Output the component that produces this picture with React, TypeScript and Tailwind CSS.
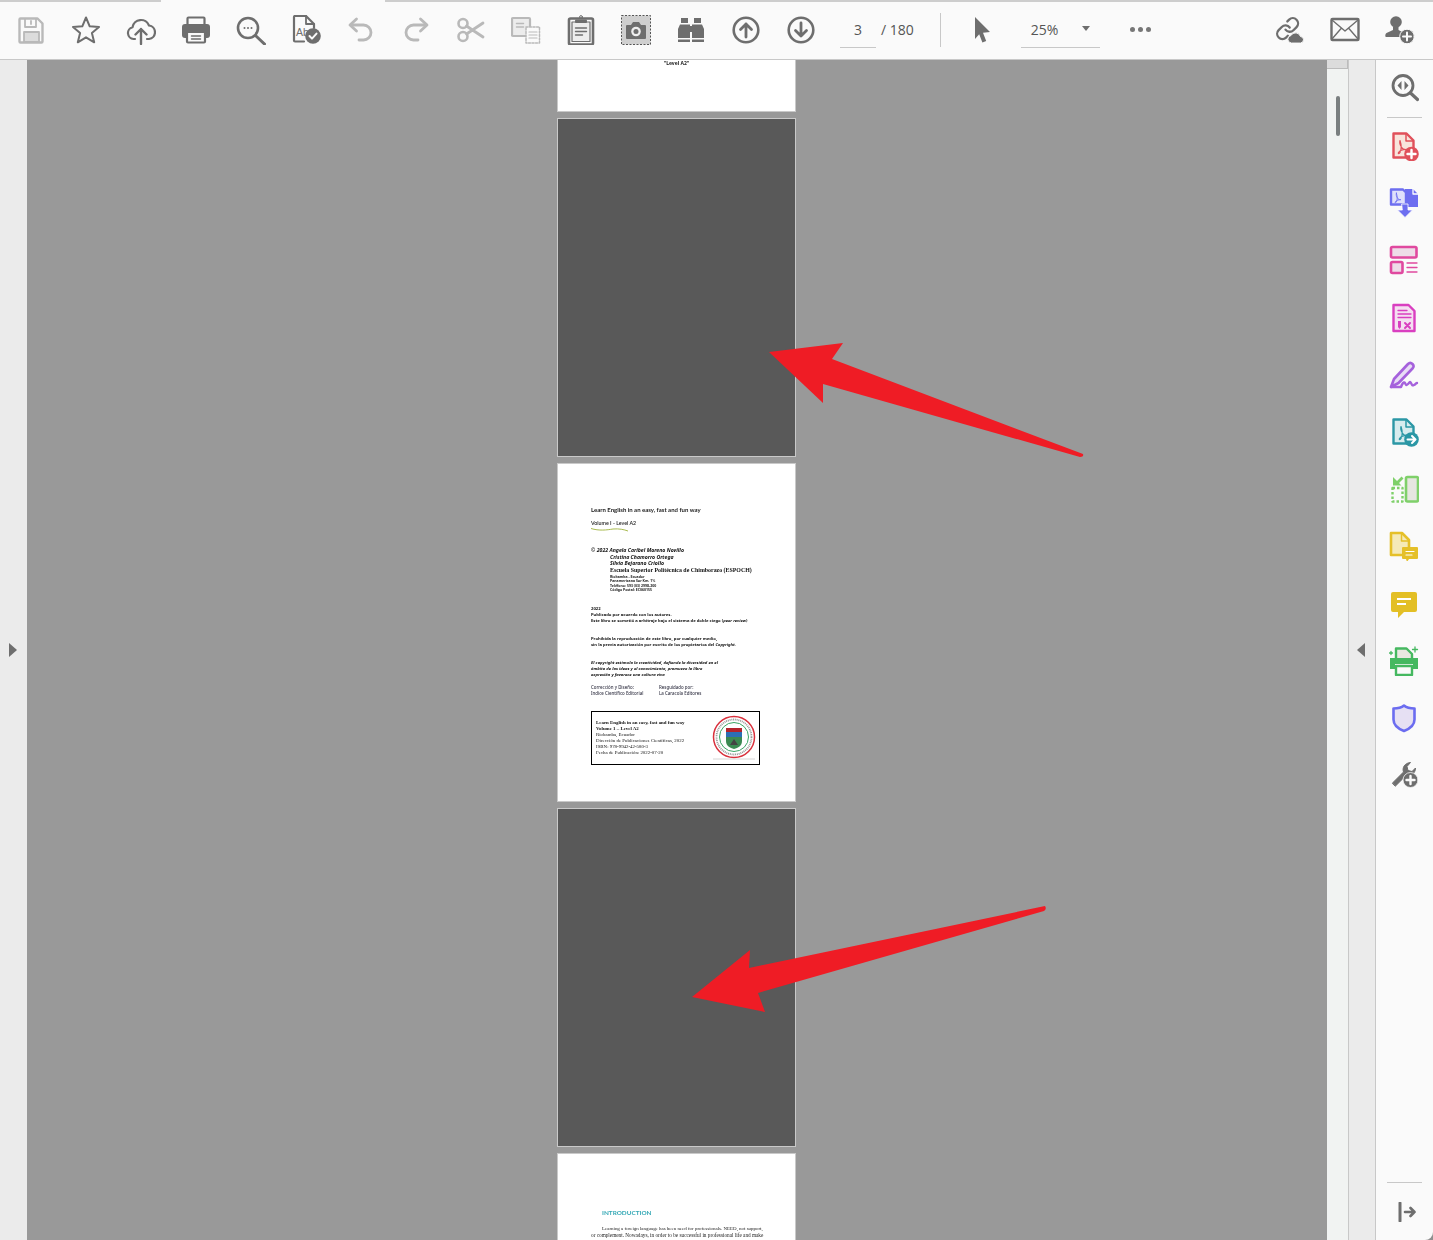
import React from "react";

const D = "#6e6e6e";
const L = "#b9b9b9";

const Ic = ({ children, w = 30, h = 30 }: { children: React.ReactNode; w?: number; h?: number }) => (
  <svg width={w} height={h} viewBox={`0 0 ${w} ${h}`} fill="none" strokeLinecap="round" strokeLinejoin="round">
    {children}
  </svg>
);

const Acro = ({ c, x = 0, y = 0, s = 1 }: { c: string; x?: number; y?: number; s?: number }) => (
  <path transform={`translate(${x} ${y}) scale(${s})`} d="M8 2c-1 3 0 6 2 9 1 2 3 3 6 3-4 0-8 1-10 4-1 2 1 2 2 0 2-4 2-10 0-16z" stroke={c} strokeWidth="1.6" />
);

const toolbarLeft: React.ReactNode[] = [
  <Ic key="save">
    <path d="M3.500 4.500a1 1 0 0 1 1-1h17l5 5v18a1 1 0 0 1-1 1h-21a1 1 0 0 1-1-1z" stroke={L} strokeWidth="2.400" />
    <path d="M9 4v8h11V4" stroke={L} strokeWidth="1.800" />
    <path d="M15 6v3" stroke={L} strokeWidth="1.800" />
    <rect x="8" y="17" width="15" height="10" fill="#dcdcdc" stroke={L} strokeWidth="1.800" />
  </Ic>,
  <Ic key="star">
    <path d="M15 2.500l3.700 8.800 9.300.7-7.100 6 2.300 9.300-8.200-5-8.200 5 2.300-9.300-7.100-6 9.300-.7z" stroke={D} strokeWidth="2" />
  </Ic>,
  <Ic key="cloud">
    <path d="M9 24H7.500a6 6 0 0 1-1-11.800A8.600 8.600 0 0 1 23 10.500a6.800 6.800 0 0 1 0 13.500h-2" stroke={D} strokeWidth="2.200" />
    <path d="M15 29V14M9.500 19.500L15 14l5.500 5.500" stroke={D} strokeWidth="2.400" />
  </Ic>,
  <Ic key="print">
    <rect x="6.500" y="2.500" width="17" height="9" rx="1" stroke={D} strokeWidth="2.200" />
    <rect x="1" y="9" width="28" height="14" rx="3" fill={D} />
    <rect x="6" y="17" width="18" height="10.500" rx="1" fill="#fafafa" stroke={D} strokeWidth="2.200" />
    <path d="M10.500 21h9M10.500 24h9" stroke={D} strokeWidth="1.500" />
  </Ic>,
  <Ic key="find">
    <circle cx="12" cy="13" r="10" stroke={D} strokeWidth="2.600" />
    <path d="M20 21l8.500 8" stroke={D} strokeWidth="3" />
    <circle cx="8.500" cy="13" r="1" fill={D} />
    <circle cx="12" cy="13" r="1" fill={D} />
    <circle cx="15.500" cy="13" r="1" fill={D} />
  </Ic>,
  <Ic key="doc">
    <path d="M13 26.500H4a1 1 0 0 1-1-1V2a1 1 0 0 1 1-1h11l8 8v4" stroke={D} strokeWidth="2.200" />
    <path d="M15 1v8h8" stroke={D} strokeWidth="1.800" />
    <text x="5" y="21" fontSize="10.500" fill={D} fontFamily="Liberation Sans, sans-serif">Ab</text>
    <circle cx="22" cy="21" r="7.800" fill={D} />
    <path d="M18.500 21l2.500 2.600 4.500-5" stroke="#fafafa" strokeWidth="2" />
  </Ic>,
  <Ic key="undo">
    <path d="M5 10h12.500a7.500 7.500 0 0 1 0 15H13" stroke={L} strokeWidth="2.800" />
    <path d="M10.500 4L4 10l6.500 6" stroke={L} strokeWidth="2.800" />
  </Ic>,
  <Ic key="redo">
    <path d="M25 10H12.500a7.500 7.500 0 0 0 0 15H17" stroke={L} strokeWidth="2.800" />
    <path d="M19.500 4L26 10l-6.500 6" stroke={L} strokeWidth="2.800" />
  </Ic>,
  <Ic key="scissors">
    <circle cx="7" cy="8.500" r="4.500" stroke={L} strokeWidth="2.600" />
    <circle cx="7" cy="21.500" r="4.500" stroke={L} strokeWidth="2.600" />
    <path d="M10.500 11l16.500 11M10.500 19L27 8" stroke={L} strokeWidth="2.800" />
  </Ic>,
  <Ic key="copy">
    <rect x="1" y="3" width="18" height="18" rx="1" fill="#ececec" stroke={L} strokeWidth="2.200" />
    <path d="M5.500 8.500h7M5.500 12h7" stroke={L} strokeWidth="1.500" />
    <rect x="15" y="12" width="13.500" height="16" fill="#fafafa" stroke={L} strokeWidth="1.500" strokeDasharray="2 1.500" />
    <path d="M18 17h8M18 20h8M18 23h8" stroke={L} strokeWidth="1.200" />
  </Ic>,
  <Ic key="clip">
    <rect x="3" y="3.500" width="24" height="26" rx="1.500" stroke={D} strokeWidth="2.600" />
    <rect x="6" y="7" width="18" height="19.500" fill="#ededed" stroke={D} strokeWidth="1.200" />
    <path d="M10 5.500h10V7H10z" fill={D} stroke={D} strokeWidth="2" />
    <circle cx="15" cy="2" r="1.400" stroke={D} strokeWidth="1" />
    <path d="M9.500 13h11M9.500 16.500h11M9.500 20h7" stroke={D} strokeWidth="1.400" />
  </Ic>,
  <Ic key="camera">
    <rect x="0.500" y="0.500" width="29" height="29" fill="#cfcfcf" stroke="#555" strokeWidth="1" strokeDasharray="2 1.500" strokeLinecap="butt" />
    <path d="M6 10h4l2-3h6l2 3h4a1 1 0 0 1 1 1v12a1 1 0 0 1-1 1H6a1 1 0 0 1-1-1V11a1 1 0 0 1 1-1z" fill={D} />
    <circle cx="15" cy="16.500" r="4.800" fill="#eeeeee" />
    <circle cx="15" cy="16.500" r="2.500" fill={D} />
  </Ic>,
  <Ic key="binoc">
    <path d="M5 3h7v5H5zM18 3h7v5h-7z" fill={D} />
    <path d="M4 9.500h10V23H2v-9zM16 9.500h10l2 4.500v9H16z" fill={D} />
    <path d="M14 11h2v6h-2z" fill={D} />
    <path d="M2 24.500h12v2.500H2zM16 24.500h12v2.500H16z" fill={D} />
  </Ic>,
  <Ic key="up">
    <circle cx="15" cy="15" r="12.300" stroke={D} strokeWidth="2.600" />
    <path d="M15 22V9M9.500 14.500L15 9l5.500 5.500" stroke={D} strokeWidth="2.800" />
  </Ic>,
  <Ic key="down">
    <circle cx="15" cy="15" r="12.300" stroke={D} strokeWidth="2.600" />
    <path d="M15 8v13M9.500 15.500L15 21l5.500-5.500" stroke={D} strokeWidth="2.800" />
  </Ic>,
];

const Pic = ({ c, tint }: { c: string; tint: string }) => (
  <>
    <path d="M4.500 2.500h13l7 7v17h-20z" fill={tint} stroke={c} strokeWidth="2.400" />
    <path d="M17 3v7h7" stroke={c} strokeWidth="1.500" />
  </>
);

const rail: React.ReactNode[] = [
  <Ic key="create">
    <Pic c="#e0505a" tint="#f8e4dc" />
    <Acro c="#e0505a" x={5} y={8} s={0.75} />
    <circle cx="22.500" cy="23" r="7.300" fill="#e0505a" />
    <path d="M22.500 19v8M18.500 23h8" stroke="#fff" strokeWidth="2.400" />
  </Ic>,
  <Ic key="combine">
    <path d="M2 1.500h12l3 3v12H2z" fill="#dfe0fb" stroke="#6d6ef0" strokeWidth="2.400" />
    <path d="M16 1h8l5 5v13H16z" fill="#6d6ef0" />
    <path d="M24 1v5h5" stroke="#fff" strokeWidth="1.300" />
    <path d="M13 16h6v6h4.500L16 29.500 8.500 22H13z" fill="#6d6ef0" stroke="#fff" strokeWidth="0.800" />
    <Acro c="#6d6ef0" x={3} y={4} s={0.55} />
  </Ic>,
  <Ic key="organize">
    <rect x="2" y="2" width="25.500" height="10.500" rx="1.500" fill="#eedce8" stroke="#e0499f" strokeWidth="2.600" />
    <rect x="2" y="17" width="11.500" height="11" rx="1.500" fill="#eedce8" stroke="#e0499f" strokeWidth="2.600" />
    <path d="M18 18h10M18 22.500h10M18 27h10" stroke="#e0499f" strokeWidth="1.300" />
  </Ic>,
  <Ic key="form">
    <path d="M4.500 2h15l6 6v20h-21z" fill="#f4dff1" stroke="#d93fc0" strokeWidth="2.400" />
    <path d="M9 7.500h9M9 11h13M9 14.500h13" stroke="#d93fc0" strokeWidth="1.300" />
    <path d="M9 18h3v6l-1.500 2L9 24z" fill="#d93fc0" />
    <path d="M16 20l5 5M21 20l-5 5" stroke="#d93fc0" strokeWidth="2" />
  </Ic>,
  <Ic key="sign">
    <path d="M2 27l3-8L19 4c1.500-1.500 3-1.500 4.500 0s1.500 3 0 4.500L9.500 23z" fill="#e8dcf5" stroke="#a561dc" strokeWidth="2.600" />
    <path d="M2 27h10c1-3 3-6 4-4s1 3 3 1 2-3 3-1 1 3 3 2 2-2 3-2" stroke="#a561dc" strokeWidth="2.400" />
  </Ic>,
  <Ic key="export">
    <Pic c="#2b97a5" tint="#d7ecee" />
    <Acro c="#2b97a5" x={6} y={8} s={0.75} />
    <circle cx="22.500" cy="22.500" r="7.300" fill="#2b97a5" />
    <path d="M18.500 22.500h7.500M23 19l3.500 3.500L23 26" stroke="#fff" strokeWidth="2" />
  </Ic>,
  <Ic key="split">
    <rect x="17" y="3" width="12" height="24.500" rx="1.500" fill="#e6e6e0" stroke="#7fd06a" strokeWidth="2.600" />
    <rect x="3.500" y="14" width="10" height="13.500" stroke="#7fd06a" strokeWidth="2.400" strokeDasharray="2.500 2" strokeLinecap="butt" />
    <path d="M4 3v8.500h8.500L10 9l4.500-4.500-2-2L8 7z" fill="#7fd06a" />
  </Ic>,
  <Ic key="note">
    <g transform="translate(-1 0)">
      <path d="M3 2h11l7 7v15H3z" fill="#f5eab8" stroke="#e5c029" strokeWidth="2.600" />
      <path d="M13.500 2.500V10H21" stroke="#e5c029" strokeWidth="1.500" />
      <path d="M15 16h14a1 1 0 0 1 1 1v10a1 1 0 0 1-1 1h-8l-2 3-1-3h-3a1 1 0 0 1-1-1V17a1 1 0 0 1 1-1z" fill="#e5c029" />
      <path d="M18 20.500h8M18 24h6" stroke="#fff" strokeWidth="1.200" />
    </g>
  </Ic>,
  <Ic key="comment">
    <path d="M4 3h22a2 2 0 0 1 2 2v16a2 2 0 0 1-2 2H15l-6 6v-6H4a2 2 0 0 1-2-2V5a2 2 0 0 1 2-2z" fill="#e3bf25" />
    <path d="M8 10h14M8 15h9" stroke="#fff" strokeWidth="2.200" strokeLinecap="butt" />
  </Ic>,
  <Ic key="printgreen">
    <path d="M7 13V2.500h10.500L23 8v5" fill="#e8e8e0" stroke="#45b860" strokeWidth="2.400" />
    <path d="M1 12h28v11h-5v-5H6v5H1z" fill="#45b860" />
    <path d="M7 20h16v9H7z" stroke="#45b860" strokeWidth="2.400" />
    <path d="M26 1v5M23.500 3.500h5M2 5.500v3M.5 7h3" stroke="#45b860" strokeWidth="1.300" />
  </Ic>,
  <Ic key="shield">
    <path d="M15 2.500c3 2.500 7 3 10.500 3v11c0 5.500-4 9-10.500 11.500C8.500 25.500 4.500 22 4.500 16.500v-11c3.500 0 7.500-.5 10.500-3z" fill="#e6e0f3" stroke="#6b6cf0" strokeWidth="2.600" />
  </Ic>,
  <Ic key="tools">
    <g transform="translate(0 -2)">
      <path d="M3.500 25l11-11c-1.500-4 1-9 7-9.500l-3.500 4 1 4 4 1 3.500-3.500c0 5.500-5 8.500-9 7l-11 11z" fill={D} stroke={D} strokeWidth="1" />
      <circle cx="21.500" cy="22" r="7.500" fill={D} stroke="#fafafa" strokeWidth="0.800" />
      <path d="M21.500 18v8M17.500 22h8" stroke="#fafafa" strokeWidth="2.400" />
    </g>
  </Ic>,
];

const T = ({ className = "", children }: { className?: string; children: React.ReactNode }) => (
  <div className={`whitespace-nowrap ${className}`}>{children}</div>
);

const serif = "font-['Noto_Sans'] font-bold italic text-[5.200px] leading-[6.700px] text-[#111]";
const sans = "font-['Noto_Sans'] font-bold text-[4.200px] leading-[6px] text-[#111]";
const ital = "font-['Noto_Sans'] font-bold italic text-[4.200px] leading-[6px] text-[#111]";

function CopyrightPage() {
  return (
    <div className="h-[339px] w-[239px] shrink-0 overflow-hidden border border-[#c9c9c9] bg-white pl-[33px] pt-[42px] blur-[0.35px]">
      <T className="font-['Lato'] text-[6px] leading-[8px] font-bold text-[#222]">Learn English in an easy, fast and fun way</T>
      <T className="mt-[5px] font-['Lato'] text-[5.300px] leading-[8px] font-semibold text-[#222]">Volume I - Level A2</T>
      <svg width="38" height="5" viewBox="0 0 38 5" className="block">
        <path d="M0 1.500c8 2.500 16 1.500 22 .5 6-.5 11 .5 15 2" stroke="#a9bb50" strokeWidth="1" fill="none" />
      </svg>
      <div className="mt-[15px]">
        <T className={serif}>© 2022 Angela Caribel Moreno Novillo</T>
        <div className="ml-[19px]">
          <T className={serif}>Cristina Chamorro Ortega</T>
          <T className={serif}>Silvia Bejarano Criollo</T>
          <T className="font-['Liberation_Serif'] text-[5.900px] leading-[6.600px] font-bold text-[#111]">Escuela Superior Politécnica de Chimborazo (ESPOCH)</T>
          <div className="mt-[1px] font-['Noto_Sans'] text-[3.500px] leading-[4.600px] font-bold text-[#222]">
            <T>Riobamba - Ecuador</T>
            <T>Panamericana Sur Km. 1½</T>
            <T>Teléfono: 593 (03) 2998-200</T>
            <T>Código Postal: EC060155</T>
          </div>
        </div>
      </div>
      <div className="mt-[13px]">
        <T className={sans}>2022</T>
        <T className={sans}>Publicado por acuerdo con los autores.</T>
        <T className={sans}>Este libro se sometió a arbitraje bajo el sistema de doble ciego (<i>peer review</i>)</T>
      </div>
      <div className="mt-[12px]">
        <T className={sans}>Prohibida la reproducción de este libro, por cualquier medio,</T>
        <T className={sans}>sin la previa autorización por escrito de los propietarios del <i>Copyright.</i></T>
      </div>
      <div className="mt-[12px]">
        <T className={ital}>El copyright estimula la creatividad, defiende la diversidad en el</T>
        <T className={ital}>ámbito de las ideas y el conocimiento, promueve la libre</T>
        <T className={ital}>expresión y favorece una cultura viva</T>
      </div>
      <div className="mt-[6px] flex font-['Noto_Sans'] text-[4.400px] leading-[6px] font-medium text-[#334]">
        <div className="w-[68px]">
          <T>Corrección y Diseño:</T>
          <T>Indice Científico Editorial</T>
        </div>
        <div>
          <T>Resguidado por:</T>
          <T>La Caracola Editores</T>
        </div>
      </div>
      <div className="mt-[15px] flex h-[54px] w-[169px] items-center border border-black pl-[4px]">
        <div className="flex-1 font-['Liberation_Serif'] text-[4.900px] leading-[6px] font-medium text-[#111]">
          <T className="font-bold">Learn English in an easy, fast and fun way</T>
          <T className="font-bold">Volume 1 – Level A2</T>
          <T>Riobamba, Ecuador</T>
          <T>Dirección de Publicaciones Científicas, 2022</T>
          <T>ISBN: 978-9942-42-580-3</T>
          <T>Fecha de Publicación: 2022-07-20</T>
        </div>
        <svg width="46" height="46" viewBox="0 0 46 46" className="mr-[2px] shrink-0">
          <circle cx="23" cy="22" r="20.500" fill="#fff" stroke="#d9303c" strokeWidth="1.500" />
          <circle cx="23" cy="22" r="17.500" fill="none" stroke="#999" strokeWidth="1.800" strokeDasharray="1 .8" />
          <circle cx="23" cy="22" r="14.500" fill="#fff" stroke="#3aa564" strokeWidth="1" />
          <rect x="15" y="13" width="16" height="4" fill="#b4232c" />
          <rect x="15" y="17" width="16" height="5" fill="#2c6fb5" />
          <path d="M15 22h16v4c0 5-4 7-8 8-4-1-8-3-8-8z" fill="#3b8a52" />
          <path d="M19 30l4-6 4 6z" fill="#444" />
          <path d="M2 44h42" stroke="#ccc" strokeWidth="0.800" />
        </svg>
      </div>
    </div>
  );
}

function BlankPage() {
  return <div className="h-[339px] w-[239px] shrink-0 border border-[#c9c9c9] bg-[#595959]" />;
}

export default function App() {
  return (
    <div className="relative flex h-[1240px] w-[1433px] flex-col overflow-hidden bg-[#8f8f8f] font-['Open_Sans',sans-serif]">
      <header className="flex h-[60px] shrink-0 flex-col border-b border-[#c8c8c8] bg-[#fafafa]">
        <div className="flex h-[2px] shrink-0">
          <div className="w-[161px] bg-[#cdcdcd]" />
          <div className="w-[224px]" />
          <div className="flex-1 bg-[#cdcdcd]" />
        </div>
        <div className="flex flex-1 items-center pb-[2px] pl-[3.500px]">
          {toolbarLeft.map((icon, i) => (
            <div key={i} className="flex h-[30px] w-[55px] shrink-0 items-center justify-center">
              {icon}
            </div>
          ))}
          <div className="ml-[11.500px] flex h-[36px] w-[36px] items-center justify-center border-b border-[#c8c8c8] text-[14px] text-[#555]">3</div>
          <div className="ml-[5px] text-[14px] text-[#555]">/ 180</div>
          <div className="ml-[26px] h-[34px] w-px bg-[#c8c8c8]" />
          <div className="ml-[26px] flex h-[30px] w-[30px] items-center justify-center">
            <svg width="30" height="30" viewBox="0 0 30 30">
              <path d="M8 2L23 17l-7 .8 3.200 8.200-3.800 1.500-3.200-8.200L8 24z" fill={D} />
            </svg>
          </div>
          <div className="ml-[24px] flex h-[36px] w-[79px] items-center justify-between border-b border-[#c8c8c8] pl-[10px] pr-[9px] text-[14px] text-[#555]">
            <span>25%</span>
            <svg width="10" height="6" viewBox="0 0 10 6"><path d="M1 0h8L5 5z" fill={D} /></svg>
          </div>
          <div className="ml-[30px] flex gap-[3px]">
            <div className="size-[5px] rounded-full bg-[#777]" />
            <div className="size-[5px] rounded-full bg-[#777]" />
            <div className="size-[5px] rounded-full bg-[#777]" />
          </div>
          <div className="ml-[124px] flex items-center gap-[25px]">
            <Ic>
              <g transform="translate(0 1) scale(1.050)" stroke={D} strokeWidth="2.200">
                <path d="M10 13a5 5 0 0 0 7.540.54l3-3a5 5 0 0 0-7.070-7.070l-1.720 1.710" />
                <path d="M14 11a5 5 0 0 0-7.540-.54l-3 3a5 5 0 0 0 7.070 7.070l1.710-1.710" />
              </g>
              <path d="M16 28a3.800 3.800 0 0 1 0-7.500 5.200 5.200 0 0 1 9.500 1 3.300 3.300 0 0 1 .5 6.500z" fill={D} stroke="#fafafa" strokeWidth="1" />
            </Ic>
            <Ic>
              <rect x="1.500" y="4" width="27" height="21" rx="1" stroke={D} strokeWidth="2.400" />
              <path d="M2 5l13 11L28 5M2 24l9.500-11M28 24l-9.500-11" stroke={D} strokeWidth="1.400" />
            </Ic>
            <Ic>
              <circle cx="11" cy="7" r="5.800" fill={D} />
              <path d="M8 12v3l-6.500 3c-1.500 1-1.500 4-.5 4h14c2 0 6-3 4-4l-5.500-3v-3z" fill={D} />
              <circle cx="22" cy="21.500" r="7.300" fill={D} stroke="#fafafa" strokeWidth="1" />
              <path d="M22 17.500v8M18 21.500h8" stroke="#fafafa" strokeWidth="2" />
            </Ic>
          </div>
        </div>
      </header>

      <main className="flex min-h-0 flex-1">
        <div className="flex w-[27px] shrink-0 items-center justify-center bg-[#ebebeb] pr-[2px]">
          <svg width="8" height="14" viewBox="0 0 8 14"><path d="M0 0l8 7-8 7z" fill="#6e6e6e" /></svg>
        </div>

        <div className="flex min-w-0 flex-1 flex-col items-center gap-[6px] overflow-hidden bg-[#999999] pr-px">
          <div className="h-[52px] w-[239px] shrink-0 border border-t-0 border-[#c9c9c9] bg-white text-center font-['Noto_Sans'] text-[5px] leading-[6px] font-bold text-[#222] blur-[0.35px]">
            "Level A2"
          </div>
          <BlankPage />
          <CopyrightPage />
          <BlankPage />
          <div className="h-[90px] w-[239px] shrink-0 border border-[#c9c9c9] bg-white pt-[55px] blur-[0.35px]">
            <div className="pl-[44px] font-['Lato'] text-[6.400px] leading-[8px] font-bold text-[#34a8b5]">INTRODUCTION</div>
            <div className="mt-[9px] pl-[44px] font-['Liberation_Serif'] text-[4.950px] leading-[6px] font-medium whitespace-nowrap text-[#222]">Learning a foreign language has been need for professionals. NEED, not support,</div>
            <div className="pl-[33px] font-['Liberation_Serif'] text-[5.250px] leading-[6px] font-medium whitespace-nowrap text-[#222]">or complement. Nowadays, in order to be successful in professional life and make</div>
          </div>
        </div>

        <div className="flex w-[21px] shrink-0 flex-col items-center bg-[#f1f3f2]">
          <div className="h-[9px] w-full shrink-0 border-r border-b border-[#bcbcbc] bg-[#dcdcdc]" />
          <div className="mt-[27px] h-[40px] w-[4px] rounded-full bg-[#7a7f80]" />
        </div>

        <div className="flex w-[28px] shrink-0 items-center justify-center border-x border-[#c8c8c8] bg-[#ebebeb] pr-[2px]">
          <svg width="8" height="14" viewBox="0 0 8 14"><path d="M8 0L0 7l8 7z" fill="#6e6e6e" /></svg>
        </div>

        <aside className="flex w-[57px] shrink-0 flex-col items-center rounded-br-[8px] bg-[#fafafa] pr-px">
          <div className="flex h-[57px] shrink-0 items-center justify-center pb-[3px]">
            <Ic>
              <circle cx="14" cy="13.500" r="10" stroke={D} strokeWidth="2.800" />
              <path d="M21.500 21l7 6.500" stroke={D} strokeWidth="3.200" />
              <path d="M12.500 9v9l-4-4.500zM15.500 9v9l4-4.500z" fill={D} />
            </Ic>
          </div>
          <div className="h-px w-[35px] shrink-0 bg-[#c8c8c8]" />
          <div className="-mt-[0.500px] flex shrink-0 flex-col">
            {rail.map((icon, i) => (
              <div key={i} className="flex h-[57.200px] shrink-0 items-center justify-center">
                {icon}
              </div>
            ))}
          </div>
          <div className="mt-auto h-px w-[35px] shrink-0 bg-[#c8c8c8]" />
          <div className="flex h-[57px] shrink-0 items-center justify-center">
            <svg width="24" height="20" viewBox="0 0 24 20" fill="none" strokeLinecap="round" strokeLinejoin="round">
              <path d="M8 1v18" stroke={D} strokeWidth="3" />
              <path d="M13 10h9.500M18.500 6l4 4-4 4" stroke={D} strokeWidth="2.600" />
            </svg>
          </div>
        </aside>
      </main>

      <svg className="pointer-events-none absolute inset-0" width="1433" height="1240" viewBox="0 0 1433 1240">
        <path d="M769 352L843 343L832 359L1083 454Q1084 457 1080 457L823 384L823 403Z" fill="#ef1c25" />
        <path d="M692 997L750 950L749 968L1045 906Q1047 909 1044 911L758 993L765 1012Z" fill="#ef1c25" />
      </svg>
    </div>
  );
}
